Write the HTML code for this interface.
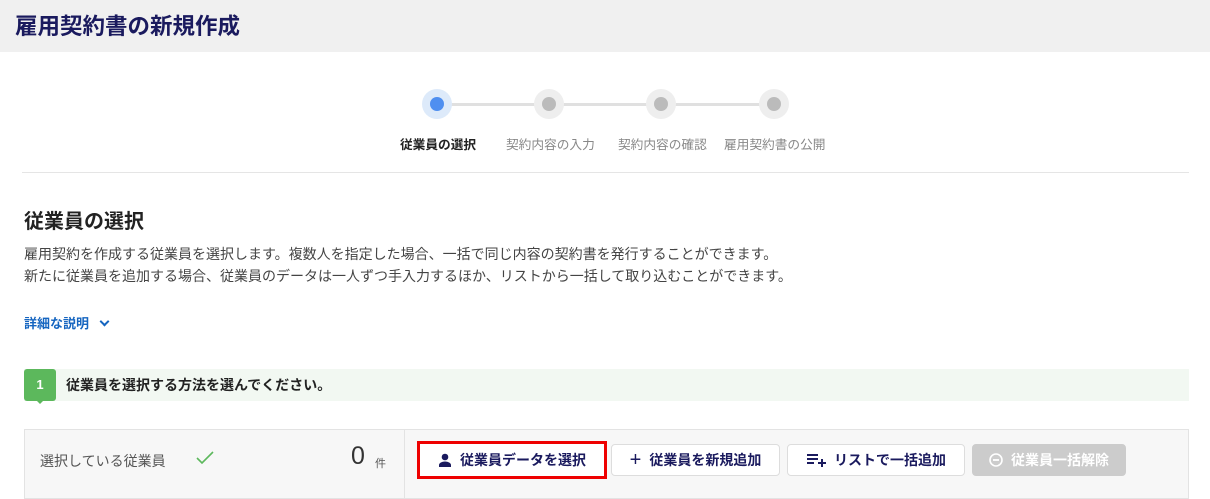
<!DOCTYPE html>
<html><head><meta charset="utf-8"><style>
*{box-sizing:border-box;margin:0;padding:0}
body{width:1210px;height:499px;overflow:hidden;background:#fff;font-family:"Liberation Sans","Noto Sans CJK JP",sans-serif;color:#333;position:relative}
.hdr{position:absolute;left:0;top:0;width:1210px;height:52px;background:#f0f0f0}
.hdr h1{position:absolute;left:15px;top:9px;font-size:22.5px;color:#1a1a5e;font-weight:bold}
.line{position:absolute;top:103px;height:3px;background:#e0e0e0}
.dot{position:absolute;top:89px;width:30px;height:30px;border-radius:50%;background:#eee}
.dot i{position:absolute;left:8px;top:8px;width:14px;height:14px;border-radius:50%;background:#bbb}
.lbl{position:absolute;top:134px;font-size:12.7px;color:#888}
.abs{position:absolute}
.btn{position:absolute;top:444px;height:32px;border:1px solid #ddd;border-radius:4px;background:#fff;font-size:14px;font-weight:bold;color:#1a1a5e;display:flex;align-items:center;justify-content:center;gap:8px}
</style></head><body>
<div class="hdr"><h1>雇用契約書の新規作成</h1></div>
<div class="line" style="left:437px;width:338px"></div>
<div class="dot" style="left:422px;background:#ddeafa"><i style="background:#4f8ff0"></i></div>
<div class="dot" style="left:534px"><i></i></div>
<div class="dot" style="left:646px"><i></i></div>
<div class="dot" style="left:759px"><i></i></div>
<div class="lbl" style="left:400px;color:#222;font-weight:bold">従業員の選択</div>
<div class="lbl" style="left:506px">契約内容の入力</div>
<div class="lbl" style="left:618px">契約内容の確認</div>
<div class="lbl" style="left:724px">雇用契約書の公開</div>
<div class="abs" style="left:22px;top:172px;width:1167px;height:1px;background:#e5e5e5"></div>
<div class="abs" style="left:24px;top:205px;font-size:20px;font-weight:bold;color:#222">従業員の選択</div>
<div class="abs" style="left:24px;top:243px;font-size:14px;line-height:22px;color:#444;white-space:nowrap">雇用契約を作成する従業員を選択します。複数人を指定した場合、一括で同じ内容の契約書を発行することができます。<br>新たに従業員を追加する場合、従業員のデータは一人ずつ手入力するほか、リストから一括して取り込むことができます。</div>
<div class="abs" style="left:24px;top:313px;font-size:13px;font-weight:bold;color:#1565c0">詳細な説明 <span style="display:inline-block;width:7px;height:7px;border-right:2px solid #1565c0;border-bottom:2px solid #1565c0;transform:rotate(45deg);margin:0 0 3px 8px"></span></div>
<div class="abs" style="left:24px;top:369px;width:1165px;height:32px;background:#f2f8f2"></div>
<div class="abs" style="left:24px;top:369px;width:32px;height:32px;background:#5cb85c;border-radius:3px;color:#fff;font-weight:bold;font-size:13px;text-align:center;line-height:32px">1</div>
<div class="abs" style="left:35px;top:399px;width:0;height:0;border-left:5px solid transparent;border-right:5px solid transparent;border-top:5px solid #5cb85c"></div>
<div class="abs" style="left:66px;top:375px;font-size:14px;font-weight:bold;color:#222">従業員を選択する方法を選んでください。</div>
<div class="abs" style="left:24px;top:429px;width:1165px;height:70px;background:#f7f7f7;border:1px solid #e3e3e3"></div>
<div class="abs" style="left:404px;top:430px;width:1px;height:69px;background:#e3e3e3"></div>
<div class="abs" style="left:40px;top:451px;font-size:14px;color:#555">選択している従業員</div>
<svg class="abs" style="left:196px;top:450px" width="18" height="16" viewBox="0 0 18 16"><path d="M1 8l5 5L17 2" stroke="#5cb85c" stroke-width="1.6" fill="none"/></svg>
<div class="abs" style="left:351px;top:442px;font-size:25px;color:#333">0</div>
<div class="abs" style="left:375px;top:455px;font-size:11px;color:#555">件</div>
<div class="btn" style="left:417px;top:441px;width:190px;height:38px;border:3px solid #e00;border-radius:0"><svg width="14" height="14" viewBox="0 0 14 14"><circle cx="7" cy="4" r="3.3" fill="#1a1a5e"/><path d="M1 14v-2c0-2 3-3.5 6-3.5s6 1.5 6 3.5v2z" fill="#1a1a5e"/></svg>従業員データを選択</div>
<div class="btn" style="left:611px;width:169px"><span style="font-size:20px;font-weight:normal">+</span>従業員を新規追加</div>
<div class="btn" style="left:787px;width:178px"><svg width="20" height="14" viewBox="0 0 20 14"><path d="M1 2h11M1 6h11M1 10h7M12 10h8M16 6v8" stroke="#1a1a5e" stroke-width="2"/></svg>リストで一括追加</div>
<div class="btn" style="left:972px;width:154px;background:#ccc;border-color:#ccc;color:#fff"><svg width="14" height="14" viewBox="0 0 14 14"><circle cx="7" cy="7" r="6" fill="none" stroke="#fff" stroke-width="1.6"/><path d="M4 7h6" stroke="#fff" stroke-width="1.8"/></svg>従業員一括解除</div>
</body></html>
